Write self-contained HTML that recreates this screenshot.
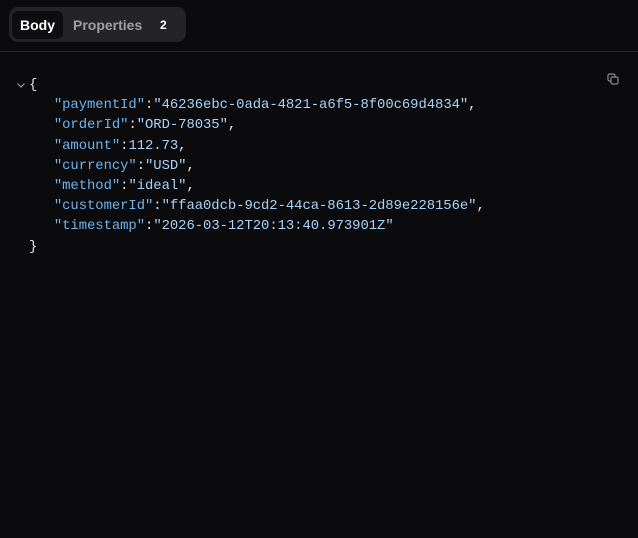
<!DOCTYPE html>
<html><head><style>
body{margin:0;background:#0b0b0d;width:638px;height:538px;overflow:hidden;font-family:"Liberation Sans",sans-serif;}
.tabs{position:absolute;left:9px;top:7px;width:177px;height:35px;background:#242426;border-radius:9px;}
.body{position:absolute;left:3px;top:4px;width:51px;height:28px;background:#0e0e10;border-radius:6px;color:#fff;font-weight:bold;font-size:14px;line-height:28px;text-align:center;}
.prop{position:absolute;left:64px;top:4px;line-height:28px;color:#a0a0a4;font-weight:bold;font-size:14px;}
.cnt{position:absolute;left:151px;top:4px;line-height:28px;color:#fff;font-weight:bold;font-size:12px;}
.hr{position:absolute;left:0;top:51px;width:638px;height:1px;background:#262628;}
pre{position:absolute;left:29px;top:75px;margin:0;font-family:"Liberation Mono",monospace;font-size:13.9px;letter-spacing:-0.05px;line-height:20.2px;color:#e6e6e6;}
.k{color:#6fb3ee}.v{color:#a8d3f8}
.chev{position:absolute;left:16px;top:81px;}
.copy{position:absolute;left:607px;top:73px;}
</style></head><body>
<div class="tabs"><div class="body">Body</div><div class="prop">Properties</div><div class="cnt">2</div></div>
<div class="hr"></div>
<svg class="chev" width="10" height="8" viewBox="0 0 10 8"><path d="M1.5 2.5L5 6L8.5 2.5" stroke="#9a9a9e" stroke-width="1.2" fill="none"/></svg>
<svg class="copy" width="12" height="12" viewBox="0 0 12 12" fill="none" stroke="#8a8a8e" stroke-width="1.2"><rect x="1" y="1" width="7" height="7" rx="1.5"/><rect x="4" y="4" width="7" height="7" rx="1.5" fill="#0b0b0d"/></svg>
<pre>{
   <span class="k">"paymentId"</span>:<span class="v">"46236ebc-0ada-4821-a6f5-8f00c69d4834"</span>,
   <span class="k">"orderId"</span>:<span class="v">"ORD-78035"</span>,
   <span class="k">"amount"</span>:<span class="v">112.73</span>,
   <span class="k">"currency"</span>:<span class="v">"USD"</span>,
   <span class="k">"method"</span>:<span class="v">"ideal"</span>,
   <span class="k">"customerId"</span>:<span class="v">"ffaa0dcb-9cd2-44ca-8613-2d89e228156e"</span>,
   <span class="k">"timestamp"</span>:<span class="v">"2026-03-12T20:13:40.973901Z"</span>
}</pre>
</body></html>
